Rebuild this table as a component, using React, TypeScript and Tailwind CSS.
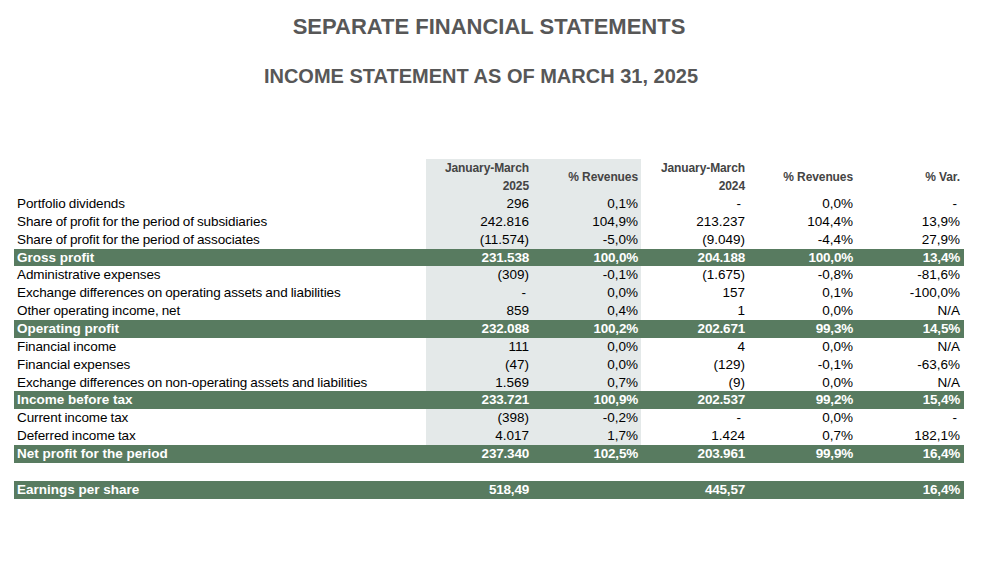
import React from 'react';

type Row = {
  label: string;
  values: string[];
  total?: boolean;
  shaded?: boolean;
};

const rows: Row[] = [
  { label: 'Portfolio dividends', values: ['296', '0,1%', '-', '0,0%', '-'], shaded: true },
  { label: 'Share of profit for the period of subsidiaries', values: ['242.816', '104,9%', '213.237', '104,4%', '13,9%'], shaded: true },
  { label: 'Share of profit for the period of associates', values: ['(11.574)', '-5,0%', '(9.049)', '-4,4%', '27,9%'], shaded: true },
  { label: 'Gross profit', values: ['231.538', '100,0%', '204.188', '100,0%', '13,4%'], total: true },
  { label: 'Administrative expenses', values: ['(309)', '-0,1%', '(1.675)', '-0,8%', '-81,6%'], shaded: true },
  { label: 'Exchange differences on operating assets and liabilities', values: ['-', '0,0%', '157', '0,1%', '-100,0%'], shaded: true },
  { label: 'Other operating income, net', values: ['859', '0,4%', '1', '0,0%', 'N/A'], shaded: true },
  { label: 'Operating profit', values: ['232.088', '100,2%', '202.671', '99,3%', '14,5%'], total: true },
  { label: 'Financial income', values: ['111', '0,0%', '4', '0,0%', 'N/A'], shaded: true },
  { label: 'Financial expenses', values: ['(47)', '0,0%', '(129)', '-0,1%', '-63,6%'], shaded: true },
  { label: 'Exchange differences on non-operating assets and liabilities', values: ['1.569', '0,7%', '(9)', '0,0%', 'N/A'], shaded: true },
  { label: 'Income before tax', values: ['233.721', '100,9%', '202.537', '99,2%', '15,4%'], total: true },
  { label: 'Current income tax', values: ['(398)', '-0,2%', '-', '0,0%', '-'], shaded: true },
  { label: 'Deferred income tax', values: ['4.017', '1,7%', '1.424', '0,7%', '182,1%'], shaded: true },
  { label: 'Net profit for the period', values: ['237.340', '102,5%', '203.961', '99,9%', '16,4%'], total: true },
];

const cols = 'grid grid-cols-[412px_107px_108px_107px_108px_108px]';
const pads = ['pr-[4px]', 'pr-[3px]', 'pr-[3px]', 'pr-[3px]', 'pr-[4px]'];

function Cell({ value, i, shaded, total }: { value: string; i: number; shaded?: boolean; total?: boolean }) {
  const bg = shaded && i < 2 ? 'bg-[#e4e9e9]' : '';
  const dash = value === '-' ? 'pr-[7px]' : pads[i];
  return (
    <div className={`flex items-center justify-end ${bg} ${dash} ${total ? 'font-bold tracking-[-0.2px]' : ''}`}>
      {value}
    </div>
  );
}

function TableRow({ row }: { row: Row }) {
  return (
    <div
      className={`${cols} h-[17.86px] leading-[17.86px] ${row.total ? 'bg-[#587b60] text-white' : 'text-black'}`}
    >
      <div className={`pl-[3px] whitespace-nowrap ${row.total ? 'font-bold' : '[word-spacing:-0.5px] tracking-[-0.1px]'}`}>
        {row.label}
      </div>
      {row.values.map((v, i) => (
        <Cell key={i} value={v} i={i} shaded={row.shaded} total={row.total} />
      ))}
    </div>
  );
}

export default function App() {
  return (
    <div className="w-[990px] h-[564px] bg-white font-['Liberation_Sans',Arial,sans-serif] overflow-hidden">
      <div className="ml-[14px] w-[950px]">
        <h1 className="pt-[16px] text-center text-[22px] leading-[22px] font-bold text-[#575757]">
          SEPARATE FINANCIAL STATEMENTS
        </h1>
        <h2 className="mt-[28px] pr-[16px] text-center text-[20px] leading-[20px] font-bold text-[#575757]">
          INCOME STATEMENT AS OF MARCH 31, 2025
        </h2>

        <div className="mt-[73px] text-[13.5px]">
          <div className={`${cols} h-[36px] text-[12px] font-bold text-[#444] tracking-[-0.1px]`}>
            <div />
            <div className="flex flex-col items-end justify-center bg-[#e4e9e9] pr-[4px] leading-[18px]">
              <span>January-March</span>
              <span>2025</span>
            </div>
            <div className="flex items-center justify-end bg-[#e4e9e9] pr-[3px]">% Revenues</div>
            <div className="flex flex-col items-end justify-center pr-[3px] leading-[18px]">
              <span>January-March</span>
              <span>2024</span>
            </div>
            <div className="flex items-center justify-end pr-[3px]">% Revenues</div>
            <div className="flex items-center justify-end pr-[4px]">% Var.</div>
          </div>

          {rows.map((r) => (
            <TableRow key={r.label} row={r} />
          ))}

          <div className="h-[17.86px]" />

          <TableRow row={{ label: 'Earnings per share', values: ['518,49', '', '445,57', '', '16,4%'], total: true }} />
        </div>
      </div>
    </div>
  );
}
